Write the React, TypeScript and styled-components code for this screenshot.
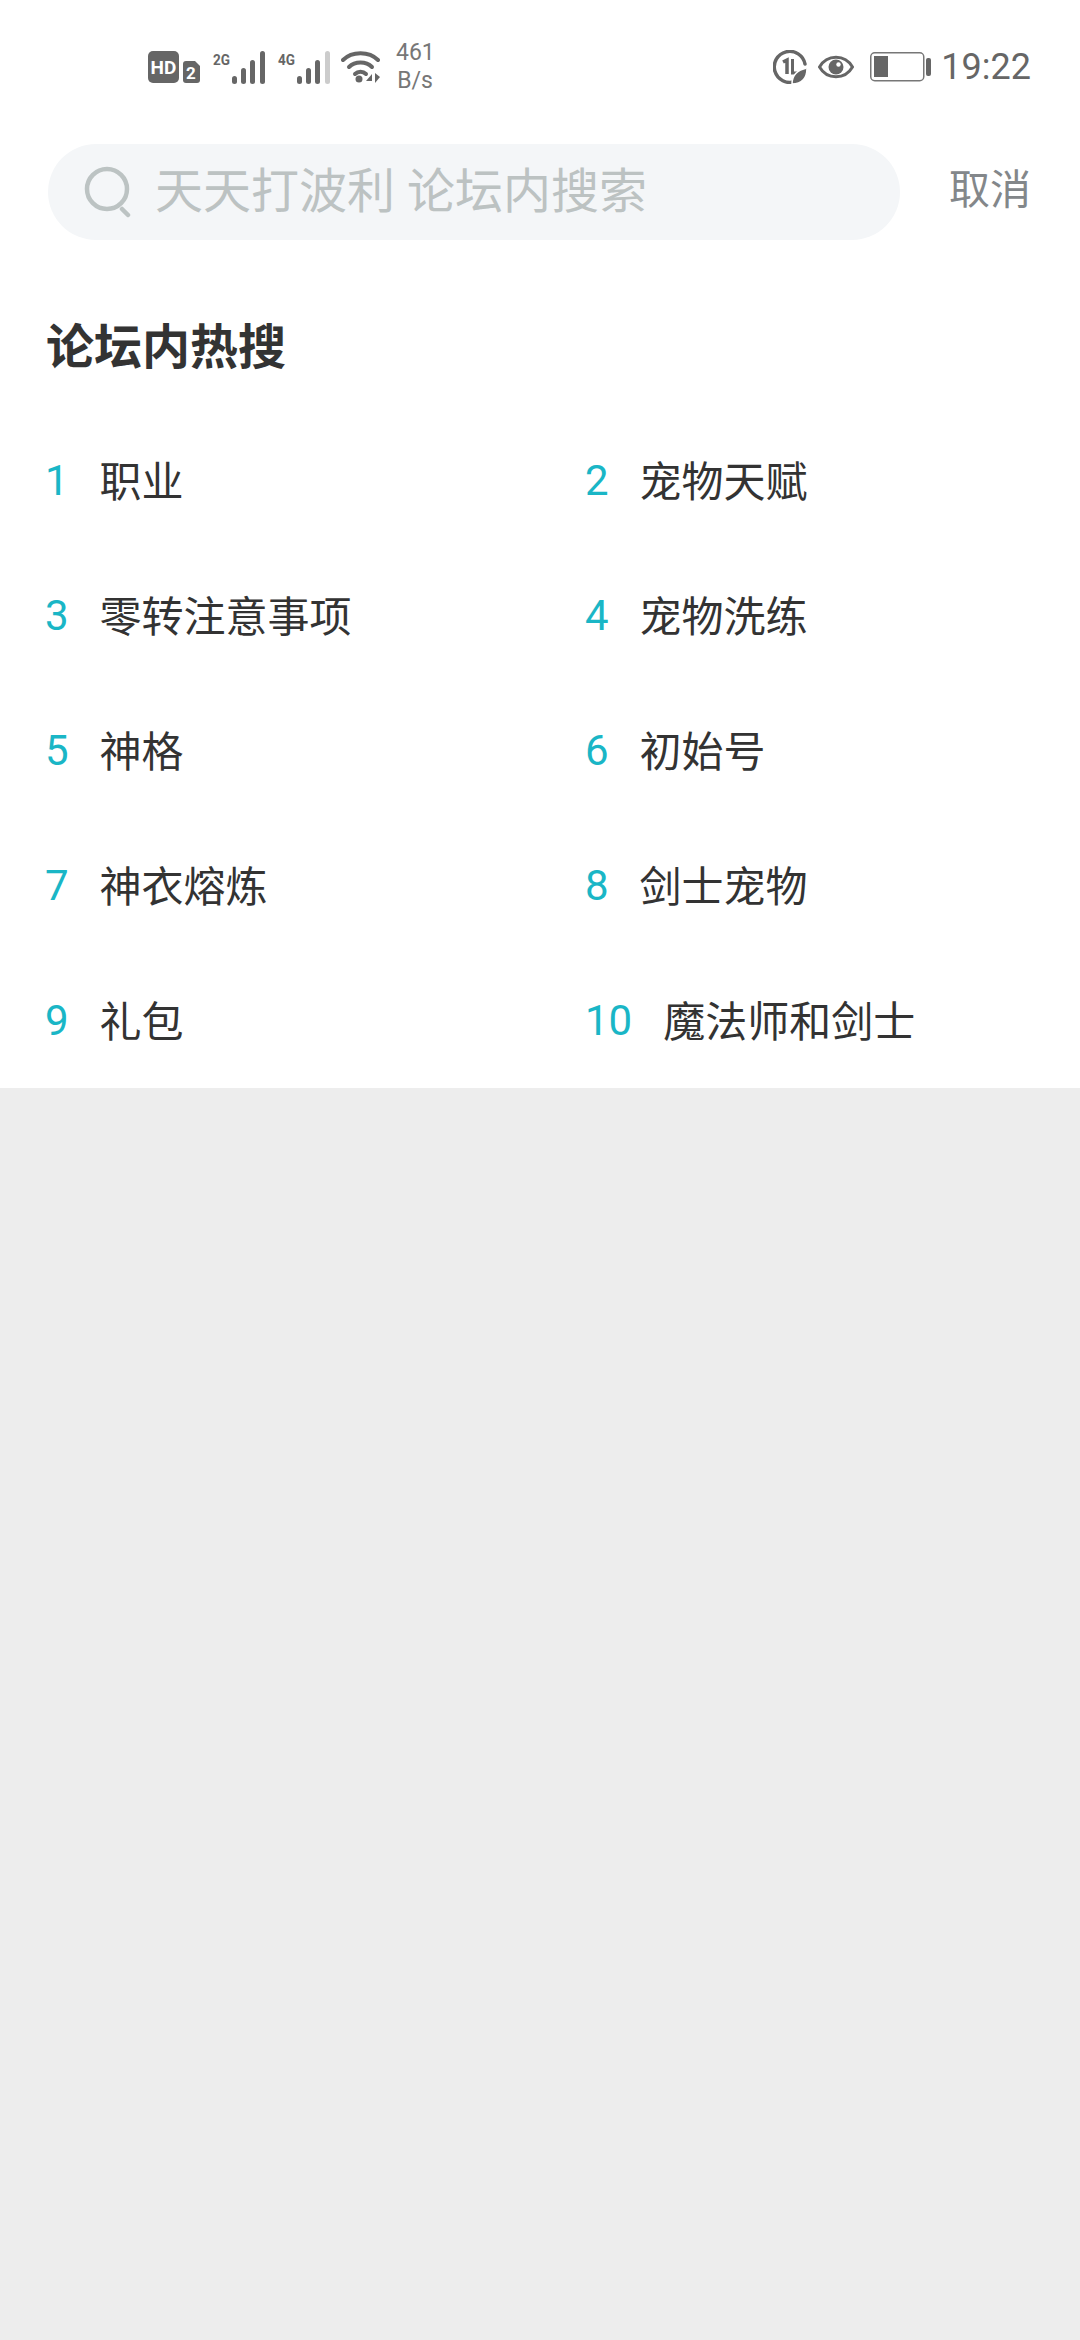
import styled, { createGlobalStyle } from "styled-components";

const GlobalStyle = createGlobalStyle`
  html, body {
    margin: 0;
    padding: 0;
    background: #ededed;
  }
  body {
    font-family: Roboto, "Noto Sans CJK SC", sans-serif;
  }
`;

const Page = styled.div`
  width: 1080px;
  height: 2340px;
  background: #ededed;
  overflow: hidden;
`;

const Panel = styled.div`
  background: #fff;
  height: 1088px;
  display: flex;
  flex-direction: column;
`;

const StatusBar = styled.div`
  height: 134px;
  padding: 0 49px 0 148px;
  box-sizing: border-box;
  display: flex;
  align-items: center;
  justify-content: space-between;
`;

const StatusGroup = styled.div`
  display: flex;
  align-items: center;
`;

const IconSlot = styled.div<{ $left?: number }>`
  display: flex;
  margin-left: ${(p) => p.$left ?? 0}px;
`;

const NetSpeed = styled.div`
  width: 38px;
  margin-left: 16px;
  font-size: 23px;
  line-height: 28px;
  color: #777;
  text-align: center;
`;

const Clock = styled.div`
  font-size: 36px;
  color: #666;
  margin-left: 10px;
`;

const SearchRow = styled.div`
  display: flex;
  align-items: center;
  justify-content: space-between;
  margin-top: 10px;
  padding: 0 49px 0 48px;
`;

const SearchBox = styled.div`
  width: 852px;
  height: 96px;
  border-radius: 48px;
  background: #f4f6f8;
  display: flex;
  align-items: center;
  padding-left: 36px;
  box-sizing: border-box;
`;

const Placeholder = styled.div`
  font-size: 48px;
  line-height: 96px;
  height: 96px;
  color: #bcc2c2;
  margin-left: 23px;
  white-space: nowrap;
`;

const Cancel = styled.div`
  font-size: 41px;
  line-height: 92px;
  height: 96px;
  color: #83878a;
`;

const Title = styled.div`
  margin: 76px 0 0 46px;
  font-size: 48px;
  font-weight: 700;
  color: #333;
  line-height: 64px;
`;

const HotGrid = styled.div`
  display: grid;
  grid-template-columns: 540px 1fr;
  grid-auto-rows: 135px;
  margin-top: 31px;
  padding-left: 45px;
`;

const HotItem = styled.div`
  display: flex;
  align-items: center;
  font-size: 42px;
  color: #333;
  white-space: nowrap;
`;

const Rank = styled.span`
  color: #1ab6c6;
  font-size: 42px;
  line-height: 1;
  margin-top: 4px;
  margin-right: 31px;
`;

const hotWords = [
  "职业",
  "宠物天赋",
  "零转注意事项",
  "宠物洗练",
  "神格",
  "初始号",
  "神衣熔炼",
  "剑士宠物",
  "礼包",
  "魔法师和剑士",
];

function SignalIcon({ label, dim }: { label: string; dim?: boolean }) {
  return (
    <svg width="53" height="34" viewBox="0 0 53 34" overflow="visible">
      <text
        x="0"
        y="15"
        fontFamily="'Liberation Sans Narrow', Roboto, sans-serif"
        fontSize="15"
        fontWeight="700"
        fill="#666"
        textLength="17"
        lengthAdjust="spacingAndGlyphs"
      >
        {label}
      </text>
      <rect x="19" y="26" width="5" height="8" rx="2.5" fill="#666" />
      <rect x="28" y="18" width="5" height="16" rx="2.5" fill="#666" />
      <rect x="37" y="10" width="5" height="24" rx="2.5" fill="#666" />
      <rect x="47" y="1" width="5" height="33" rx="2.5" fill={dim ? "#ccc" : "#666"} />
    </svg>
  );
}

function HdIcon() {
  return (
    <svg width="52" height="32" viewBox="0 0 52 32">
      <rect x="0" y="0" width="31" height="32" rx="5" fill="#666" />
      <text x="15.5" y="23" textAnchor="middle" fontFamily="Roboto, sans-serif" fontSize="19" fontWeight="700" fill="#fff">
        HD
      </text>
      <path d="M38 10 h9 l5 5 v14 a3 3 0 0 1 -3 3 h-11 a3 3 0 0 1 -3 -3 v-16 a3 3 0 0 1 3 -3z" fill="#666" />
      <text x="43" y="28" textAnchor="middle" fontFamily="Roboto, sans-serif" fontSize="17" fontWeight="700" fill="#fff">
        2
      </text>
    </svg>
  );
}

function WifiIcon() {
  return (
    <svg width="39" height="32" viewBox="0 0 39 32" fill="none" stroke="#666" strokeWidth="4" strokeLinecap="round">
      <path d="M2 9 C11 0 28 0 37 9" />
      <path d="M8 16 C14 10 25 10 31 16" />
      <path d="M14 23 C17 20 22 20 25 23" />
      <circle cx="18" cy="28" r="3.5" fill="#666" stroke="none" />
      <path d="M31 23 V30 H25 Z" fill="#666" stroke="none" />
      <path d="M34 22 V32 L39 26 Z" fill="#666" stroke="none" />
    </svg>
  );
}

function SaverIcon() {
  return (
    <svg width="34" height="34" viewBox="0 0 34 34">
      <path d="M22 31.5 A15.5 15.5 0 1 1 32 14" fill="none" stroke="#666" strokeWidth="3.5" strokeLinecap="round" />
      <path d="M10 12 L14 10 V24" fill="none" stroke="#666" strokeWidth="3.5" />
      <path d="M19.5 9 V23 H25" fill="none" stroke="#666" strokeWidth="3" />
      <path d="M19 34 C19 25 24 20 34 18 C34 29 29 34 19 34Z" fill="#666" stroke="#fff" strokeWidth="1.5" />
    </svg>
  );
}

function EyeIcon() {
  return (
    <svg width="36" height="26" viewBox="0 0 36 26">
      <path d="M1.5 13 C9 0 27 0 34.5 13 C27 26 9 26 1.5 13Z" fill="none" stroke="#666" strokeWidth="3" />
      <circle cx="18" cy="13" r="7.5" fill="#666" />
      <circle cx="20.5" cy="10.5" r="2.2" fill="#fff" />
    </svg>
  );
}

function BatteryIcon() {
  return (
    <svg width="61" height="30" viewBox="0 0 61 30">
      <rect x="0.75" y="0.75" width="53" height="28" rx="4" fill="none" stroke="#777" strokeWidth="1.5" />
      <rect x="4" y="4" width="14" height="21" fill="#666" />
      <rect x="56" y="6" width="5" height="18" rx="2" fill="#666" />
    </svg>
  );
}

function SearchIcon() {
  return (
    <svg width="48" height="52" viewBox="0 0 48 52" fill="none" stroke="#bcc3c3" strokeWidth="4.5" strokeLinecap="round">
      <circle cx="23" cy="23" r="20" />
      <path d="M38 43 L44 49" />
    </svg>
  );
}

export default function App() {
  return (
    <Page>
      <GlobalStyle />
      <Panel>
        <StatusBar>
          <StatusGroup>
            <IconSlot>
              <HdIcon />
            </IconSlot>
            <IconSlot $left={13}>
              <SignalIcon label="2G" />
            </IconSlot>
            <IconSlot $left={12}>
              <SignalIcon label="4G" dim />
            </IconSlot>
            <IconSlot $left={10}>
              <WifiIcon />
            </IconSlot>
            <NetSpeed>
              461
              <br />
              B/s
            </NetSpeed>
          </StatusGroup>
          <StatusGroup>
            <IconSlot>
              <SaverIcon />
            </IconSlot>
            <IconSlot $left={11}>
              <EyeIcon />
            </IconSlot>
            <IconSlot $left={16}>
              <BatteryIcon />
            </IconSlot>
            <Clock>19:22</Clock>
          </StatusGroup>
        </StatusBar>
        <SearchRow>
          <SearchBox>
            <SearchIcon />
            <Placeholder>天天打波利 论坛内搜索</Placeholder>
          </SearchBox>
          <Cancel>取消</Cancel>
        </SearchRow>
        <Title>论坛内热搜</Title>
        <HotGrid>
          {hotWords.map((word, i) => (
            <HotItem key={word}>
              <Rank>{i + 1}</Rank>
              {word}
            </HotItem>
          ))}
        </HotGrid>
      </Panel>
    </Page>
  );
}
